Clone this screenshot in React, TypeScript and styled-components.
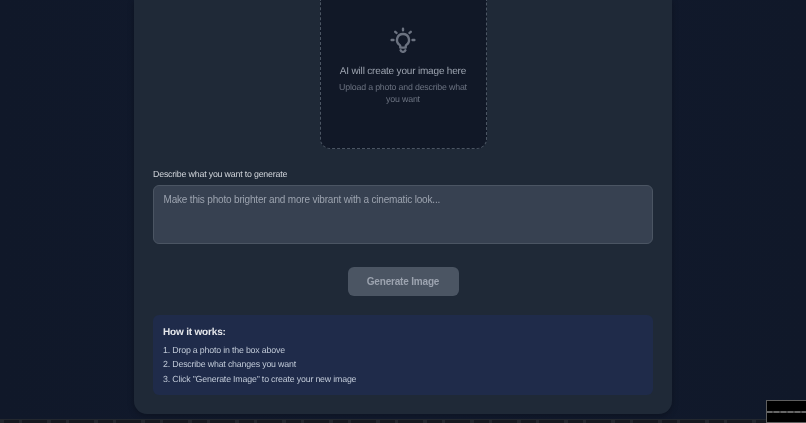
import React from 'react'
import styled, { createGlobalStyle } from 'styled-components'

const GlobalStyle = createGlobalStyle`
  html, body {
    margin: 0;
    padding: 0;
    height: 100%;
    overflow: hidden;
    background: #0f172a;
    text-rendering: geometricPrecision;
    -webkit-font-smoothing: antialiased;
  }
  #root {
    height: 100%;
  }
`

const Page = styled.div`
  position: relative;
  width: 806px;
  height: 423px;
  overflow: hidden;
  display: flex;
  flex-direction: column;
  align-items: center;
  background: linear-gradient(90deg, #101829 0%, #111a2e 50%, #101829 100%);
  font-family: 'Liberation Sans', Arial, sans-serif;
  filter: blur(0.35px);
`

const Card = styled.main`
  box-sizing: border-box;
  width: 538px;
  height: 414px;
  flex: none;
  padding: 0 19px 19px;
  display: flex;
  flex-direction: column;
  align-items: center;
  background: #1f2937;
  border-radius: 0 0 13px 13px;
  box-shadow: 0 2px 6px rgba(0, 0, 0, 0.25);
`

const DropZone = styled.div`
  box-sizing: border-box;
  width: 167px;
  height: 149px;
  flex: none;
  padding-top: 27px;
  display: flex;
  flex-direction: column;
  align-items: center;
  background: #111827;
  border: 1px dashed #4b5563;
  border-top: none;
  border-radius: 0 0 10px 10px;
`

const Bulb = styled.svg`
  width: 26px;
  height: 26px;
  color: #6b7280;
`

const DropTitle = styled.div`
  margin-top: 12px;
  font-size: 10px;
  letter-spacing: -0.18px;
  line-height: 14px;
  color: #9ca3af;
`

const DropHint = styled.div`
  width: 135px;
  margin-top: 2px;
  font-size: 8.8px;
  letter-spacing: -0.18px;
  line-height: 12px;
  text-align: center;
  color: #6b7280;
`

const Field = styled.div`
  align-self: stretch;
  margin-top: 19px;
  display: flex;
  flex-direction: column;
  gap: 5px;
`

const Label = styled.label`
  font-size: 8.8px;
  letter-spacing: -0.18px;
  line-height: 12px;
  color: #d1d5db;
`

const Prompt = styled.textarea`
  box-sizing: border-box;
  height: 59px;
  padding: 7px 9.5px;
  resize: none;
  outline: none;
  font-family: inherit;
  font-size: 10px;
  letter-spacing: -0.18px;
  line-height: 14px;
  color: #f9fafb;
  background: #374151;
  border: 1px solid #4b5563;
  border-radius: 6px;
  &::placeholder {
    color: #9ca3af;
    opacity: 1;
  }
`

const GenerateButton = styled.button`
  box-sizing: border-box;
  width: 111px;
  height: 29px;
  margin-top: 23px;
  flex: none;
  padding: 0;
  font-family: inherit;
  font-size: 10px;
  letter-spacing: -0.18px;
  font-weight: 700;
  color: #9ca3af;
  background: #4b5563;
  border: none;
  border-radius: 6px;
`

const HowItWorks = styled.section`
  box-sizing: border-box;
  align-self: stretch;
  height: 80px;
  margin-top: 19px;
  padding: 11px 10px 10px;
  background: #1f2b4a;
  border-radius: 6px;
`

const HowTitle = styled.h3`
  margin: 0 0 4px;
  font-size: 10px;
  letter-spacing: -0.18px;
  line-height: 14px;
  font-weight: 700;
  color: #e5e7eb;
`

const Steps = styled.div`
  display: flex;
  flex-direction: column;
  gap: 2.4px;
`

const Step = styled.div`
  font-size: 8.8px;
  letter-spacing: -0.18px;
  line-height: 12px;
  color: #bfc8d6;
`

const BottomEdge = styled.div`
  position: absolute;
  left: 0;
  right: 0;
  bottom: 0;
  height: 3px;
  background: repeating-linear-gradient(90deg, #22262d 0 4px, #15181f 4px 19px, #22262d 19px 22px, #15181f 22px 47px);
  border-top: 1px solid #23282f;
`

const Thumbnail = styled.div`
  position: absolute;
  right: 0;
  bottom: 0;
  box-sizing: border-box;
  width: 40px;
  height: 23px;
  display: flex;
  align-items: center;
  background: #000;
  border: 1px solid #5f5f5f;
  border-right: none;
`

const ThumbLine = styled.div`
  width: 100%;
  height: 2px;
  background: repeating-linear-gradient(90deg, #666 0 5px, #474747 5px 7px);
`

const App = () => {
  return (
    <Page>
      <GlobalStyle />
      <Card>
        <DropZone>
          <Bulb viewBox="0 0 24 24" fill="none" stroke="currentColor" strokeWidth="2.2" strokeLinecap="round" strokeLinejoin="round">
            <path d="M12 1.5v1.5M4.8 4.5l1.2 1M19.2 4.5l-1.2 1M1.5 12H3.2M20.8 12h1.7" />
            <path d="M12 6.5a5.5 5.5 0 0 0-3.2 10c.5.4.7.8.7 1.3V19h5v-1.2c0-.5.2-.9.7-1.3A5.5 5.5 0 0 0 12 6.5z" />
            <path d="M9.8 21.5a2.4 2.4 0 0 0 4.4 0" />
          </Bulb>
          <DropTitle>AI will create your image here</DropTitle>
          <DropHint>Upload a photo and describe what you want</DropHint>
        </DropZone>
        <Field>
          <Label>Describe what you want to generate</Label>
          <Prompt placeholder="Make this photo brighter and more vibrant with a cinematic look..." />
        </Field>
        <GenerateButton disabled>Generate Image</GenerateButton>
        <HowItWorks>
          <HowTitle>How it works:</HowTitle>
          <Steps>
            <Step>1. Drop a photo in the box above</Step>
            <Step>2. Describe what changes you want</Step>
            <Step>3. Click "Generate Image" to create your new image</Step>
          </Steps>
        </HowItWorks>
      </Card>
      <BottomEdge />
      <Thumbnail>
        <ThumbLine />
      </Thumbnail>
    </Page>
  )
}

export default App
